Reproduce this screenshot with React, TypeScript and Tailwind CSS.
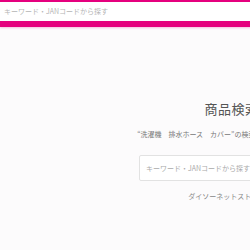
import React from 'react';

const App: React.FC = () => {
  return (
    <div
      className="w-[250px] h-[250px] overflow-hidden bg-[#fcfbfc]"
      style={{ fontFamily: '"Noto Sans CJK JP", "Noto Sans", sans-serif' }}
    >
      <div className="w-[490px]">
        {/* Header search */}
        <header className="bg-[#e5007e] pt-[2px] pb-[6px] shadow-[0_1px_2px_rgba(229,0,126,0.25)]">
          <div className="h-[19px] bg-white flex items-center pl-[4px]">
            <span className="text-[7px] text-[#b5b5b5] leading-none">キーワード・JANコードから探す</span>
          </div>
        </header>

        {/* Main */}
        <main className="flex flex-col items-center pt-[75px]">
          <h1 className="text-[13px] text-[#555] leading-none tracking-[0.5px]">商品検索結果</h1>
          <p className="mt-[16px] text-[7px] text-[#777] leading-none whitespace-nowrap">
            “洗濯機　排水ホース　カバー”の検索結果は見つかりませんでした。
          </p>
          <div className="mt-[17px] w-[212px] h-[26px] border border-[#e2e2e2] bg-white rounded-[2px] flex items-center px-[6px]">
            <span className="text-[7px] text-[#aaa] leading-none">キーワード・JANコードから探す</span>
          </div>
          <p className="mt-[12px] text-[7px] text-[#888] leading-none">
            ダイソーネットストア トップへ戻る
          </p>
        </main>
      </div>
    </div>
  );
};

export default App;
